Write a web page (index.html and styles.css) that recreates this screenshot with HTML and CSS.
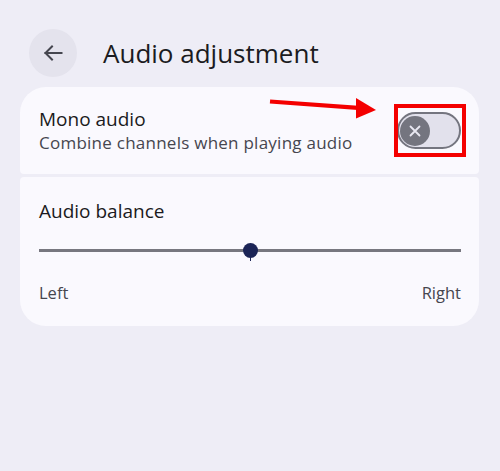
FILE: index.html
```html
<!DOCTYPE html>
<html lang="en">
<head>
<meta charset="utf-8">
<title>Audio adjustment</title>
<link rel="stylesheet" href="styles.css">
</head>
<body>
<div class="page">
  <header class="top-bar">
    <button class="back" aria-label="Back">
      <svg width="24" height="24" viewBox="0 0 24 24" fill="none" stroke="#45464f" stroke-width="2" stroke-linecap="square">
        <path d="M4.5 12H20.5"/>
        <path d="M11 5.5L4.5 12L11 18.5"/>
      </svg>
    </button>
    <h1 class="title">Audio adjustment</h1>
  </header>

  <section class="group">
    <div class="card card-top">
      <div class="text">
        <div class="label">Mono audio</div>
        <div class="summary">Combine channels when playing audio</div>
      </div>
      <div class="switch">
        <span class="thumb">
          <svg width="14" height="14" viewBox="0 0 14 14" stroke="#e9e8f2" stroke-width="1.8" stroke-linecap="round">
            <path d="M2.5 2.5L11.5 11.5M11.5 2.5L2.5 11.5"/>
          </svg>
        </span>
      </div>
      <span class="highlight"></span>
      <svg class="pointer" width="120" height="30" viewBox="0 0 120 30">
        <path d="M2 4.5L90 10.8" stroke="#f40000" stroke-width="4.2"/>
        <path d="M88 1L108 13L88 21.5Z" fill="#f40000"/>
      </svg>
    </div>

    <div class="card card-bottom">
      <div class="label">Audio balance</div>
      <div class="slider">
        <span class="track"></span>
        <span class="knob"></span>
        <span class="tick"></span>
      </div>
      <div class="ends">
        <span>Left</span>
        <span>Right</span>
      </div>
    </div>
  </section>
</div>
</body>
</html>
```

FILE: styles.css
```css
* {
  box-sizing: border-box;
}

html, body {
  margin: 0;
  height: 100%;
}

body {
  background: #eeedf6;
  font-family: "Open Sans", "Noto Sans", sans-serif;
  color: #1b1b21;
}

.page {
  padding-top: 29px;
}

.top-bar {
  display: flex;
  align-items: center;
  gap: 26px;
  padding-left: 29px;
  height: 48px;
}

.back {
  width: 48px;
  height: 48px;
  border: 0;
  padding: 0;
  border-radius: 50%;
  background: #e4e3ed;
  display: flex;
  align-items: center;
  justify-content: center;
}

.title {
  margin: 0;
  font-size: 26px;
  font-weight: 400;
  letter-spacing: 0;
  color: #1b1b21;
}

.group {
  margin: 10px 21px 0 20px;
  display: flex;
  flex-direction: column;
  gap: 3px;
}

.card {
  background: #faf9fe;
  padding: 0 18px 0 19px;
  position: relative;
}

.card-top {
  height: 87px;
  border-radius: 26px 26px 4px 4px;
  display: flex;
  align-items: center;
  justify-content: space-between;
}

.label {
  font-size: 19px;
  line-height: 24px;
  color: #1b1b21;
}

.summary {
  font-size: 17px;
  letter-spacing: 0.25px;
  line-height: 22px;
  color: #46464f;
  margin-top: 1px;
}

.switch {
  width: 64px;
  height: 37px;
  border: 2px solid #74757f;
  border-radius: 19px;
  background: #e2e1ec;
  display: flex;
  align-items: center;
  padding-left: 1px;
}

.thumb {
  width: 30px;
  height: 30px;
  border-radius: 50%;
  background: #74757f;
  display: flex;
  align-items: center;
  justify-content: center;
}

.highlight {
  position: absolute;
  left: 374px;
  top: 17px;
  width: 72px;
  height: 53px;
  border: 4px solid #f40000;
}

.pointer {
  position: absolute;
  left: 248px;
  top: 10px;
}

.card-bottom {
  height: 149px;
  border-radius: 4px 4px 26px 26px;
  padding-top: 22px;
}

.slider {
  position: relative;
  height: 14px;
  margin-top: 20px;
}

.track {
  position: absolute;
  left: 0;
  right: 0;
  top: 6px;
  height: 2.5px;
  background: #77777f;
}

.knob {
  position: absolute;
  left: 204px;
  top: 0;
  width: 15px;
  height: 15px;
  border-radius: 50%;
  background: #1b2456;
}

.tick {
  position: absolute;
  left: 211px;
  top: 14px;
  width: 1px;
  height: 4px;
  background: #1b2456;
}

.ends {
  display: flex;
  justify-content: space-between;
  margin-top: 25px;
  font-size: 16.5px;
  line-height: 22px;
  color: #46464f;
}
```
